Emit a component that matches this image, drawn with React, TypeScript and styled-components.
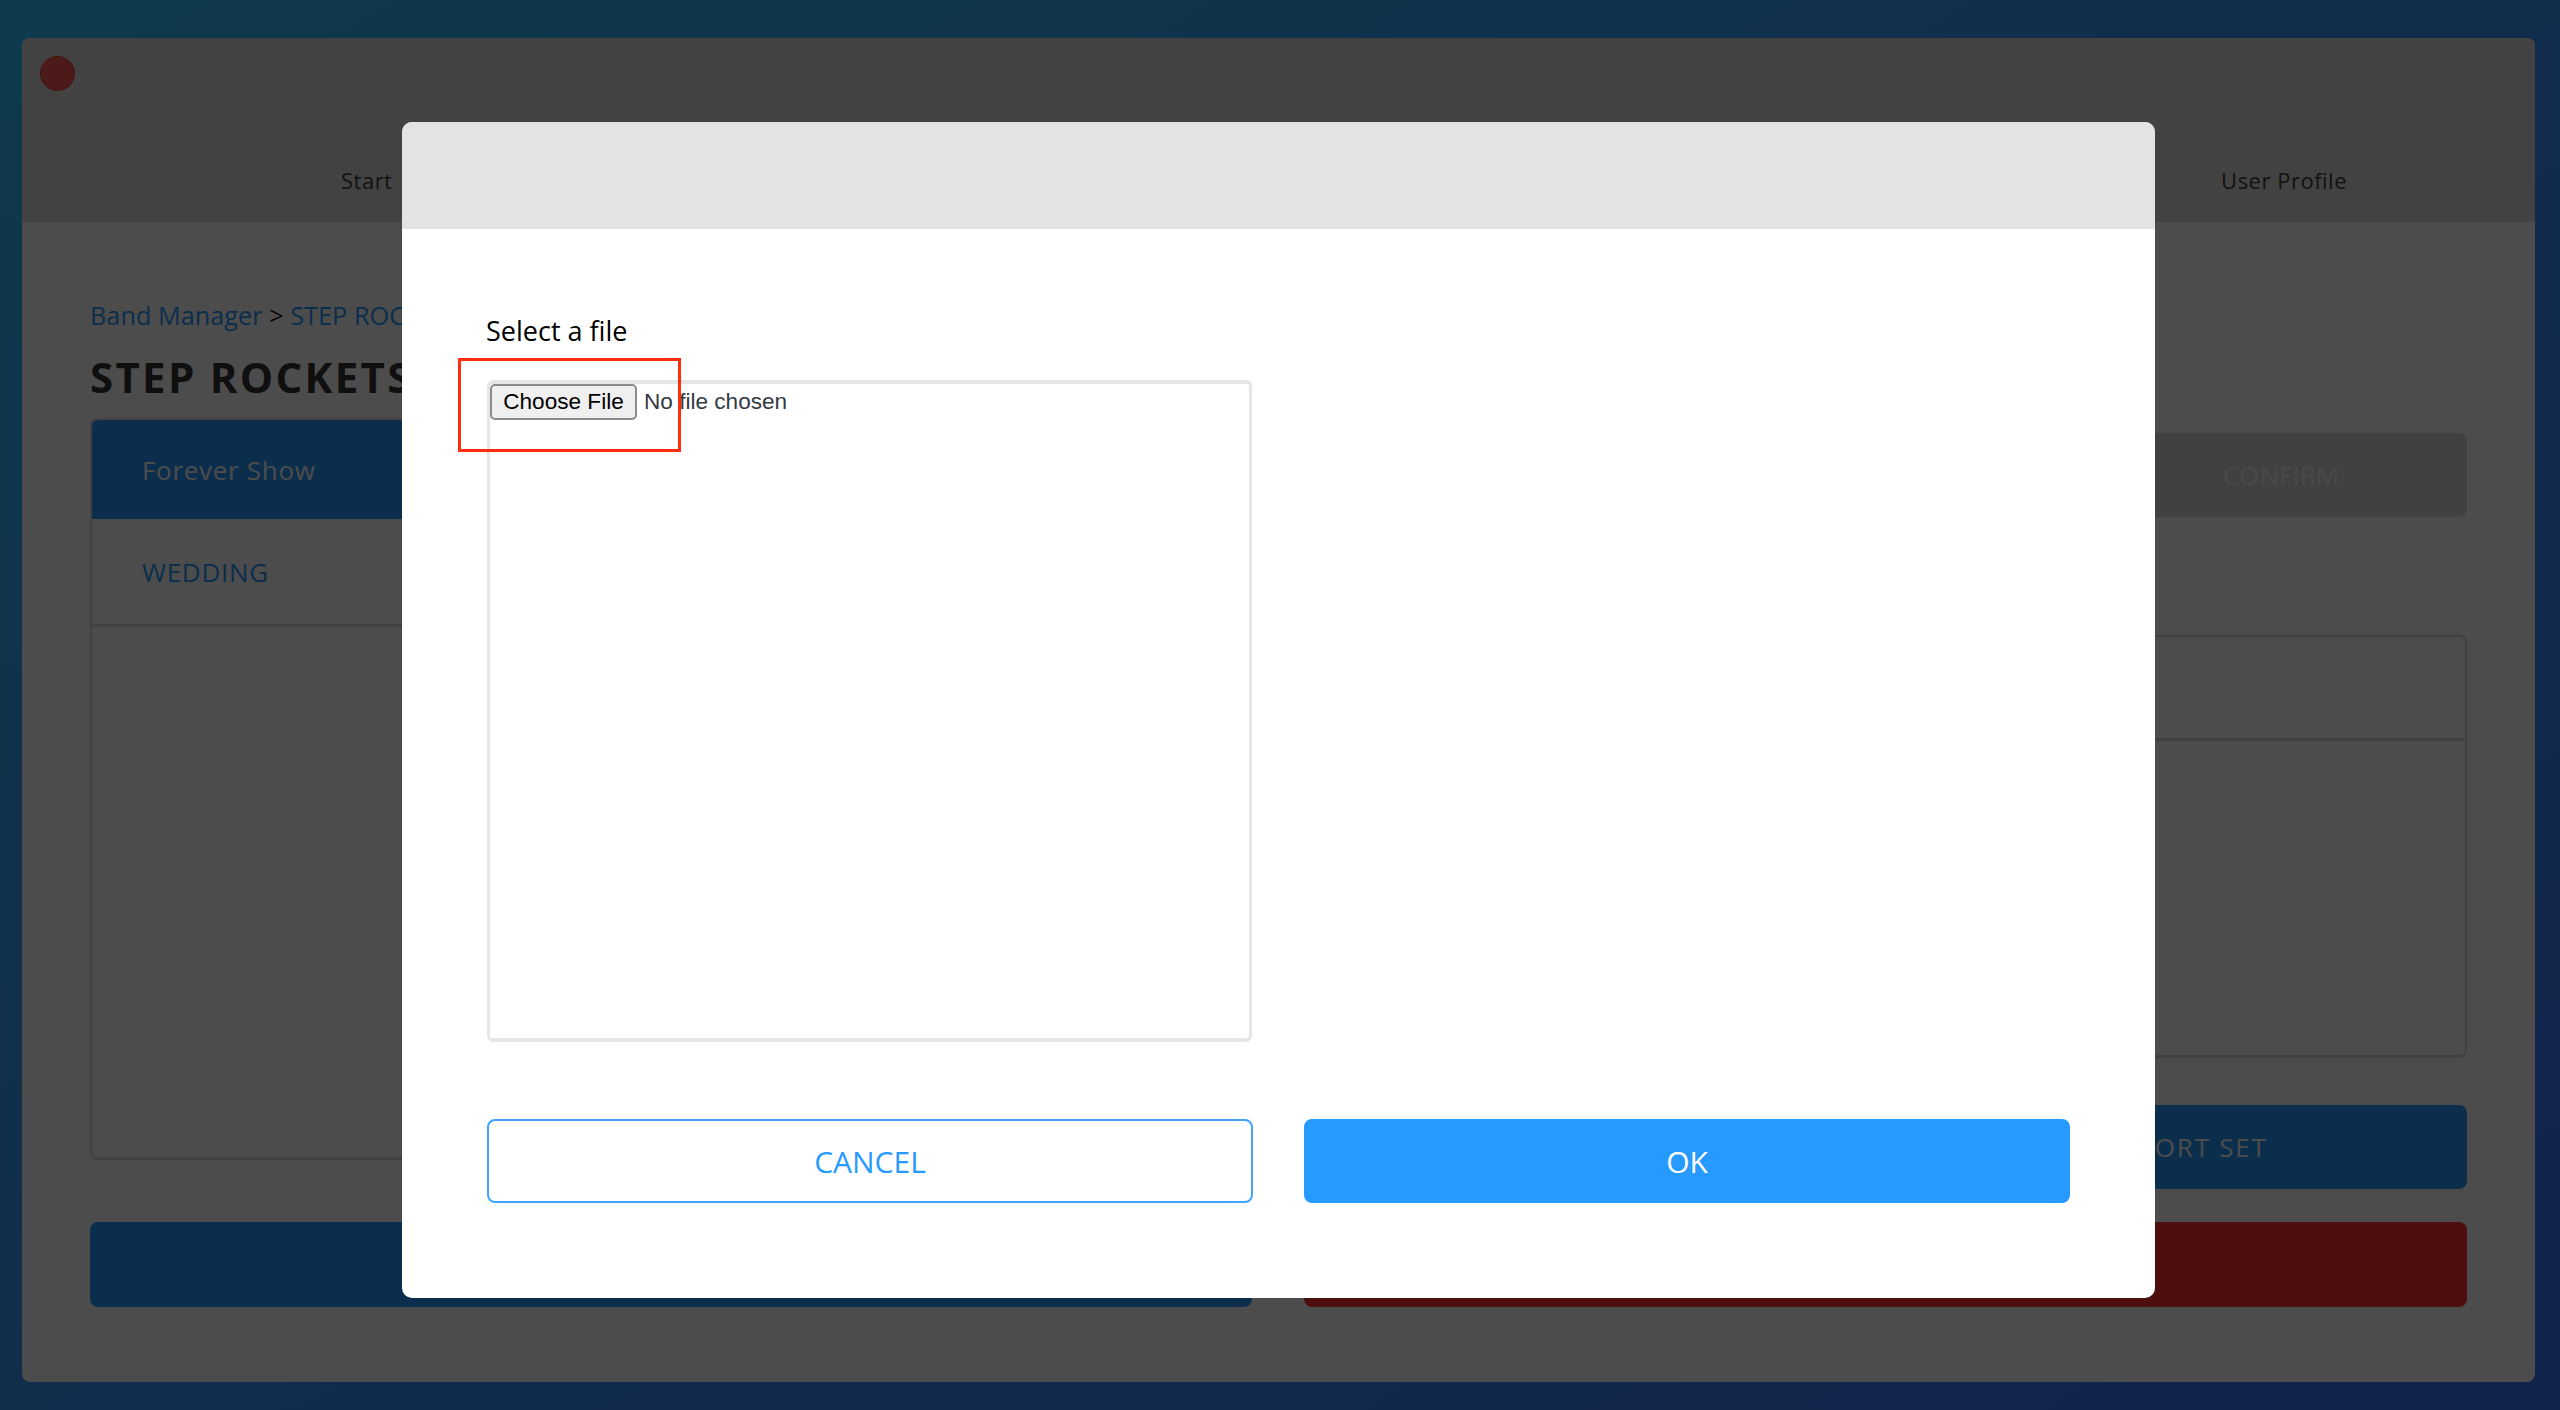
import React from "react";
import styled, { createGlobalStyle } from "styled-components";

const GlobalStyle = createGlobalStyle`
  html, body {
    margin: 0;
    padding: 0;
    height: 100%;
  }
  body {
    font-family: "Open Sans", "Noto Sans", sans-serif;
    overflow: hidden;
  }
`;

export default function App() {
  return (
    <>
      <GlobalStyle />
      <Desktop>
        <AppWindow>
          <Header>
            <CloseDot />
            <Nav>
              <NavLink>Start</NavLink>
              <NavLink>User Profile</NavLink>
            </Nav>
          </Header>
          <Main>
            <Breadcrumb>
              <a>Band Manager</a> &gt; <a>STEP ROCKETS</a>
            </Breadcrumb>
            <Title>STEP ROCKETS</Title>
            <Columns>
              <Column>
                <SetList>
                  <SetTab $active>Forever Show</SetTab>
                  <SetTab>WEDDING</SetTab>
                </SetList>
                <WideButton $tone="blue" />
              </Column>
              <Column>
                <ConfirmRow>
                  <ConfirmButton>CONFIRM</ConfirmButton>
                </ConfirmRow>
                <DetailPanel>
                  <DetailHead />
                </DetailPanel>
                <ExportRow>
                  <ExportButton>EXPORT SET</ExportButton>
                </ExportRow>
                <WideButton $tone="red" />
              </Column>
            </Columns>
          </Main>
        </AppWindow>

        <Backdrop />
        <Modal>
          <ModalHeader />
          <ModalBody>
            <FieldLabel>Select a file</FieldLabel>
            <DropBox>
              <FileRow>
                <FileButton type="button">Choose File</FileButton>
                <FileName>No file chosen</FileName>
              </FileRow>
            </DropBox>
            <Callout />
            <ModalActions>
              <ActionButton type="button">CANCEL</ActionButton>
              <ActionButton type="button" $primary>
                OK
              </ActionButton>
            </ModalActions>
          </ModalBody>
        </Modal>
      </Desktop>
    </>
  );
}

const Desktop = styled.div`
  position: relative;
  box-sizing: border-box;
  width: 2560px;
  height: 1410px;
  padding: 38px 25px 28px 22px;
  background: linear-gradient(to bottom right, #32c1ff 0%, #3996ff 50%, #3f75ff 100%);
`;

const AppWindow = styled.div`
  display: flex;
  flex-direction: column;
  height: 100%;
  background: #ffffff;
  border-radius: 8px;
  overflow: hidden;
`;

const Header = styled.header`
  position: relative;
  height: 184px;
  flex: none;
  background: #dedede;
`;

const CloseDot = styled.span`
  position: absolute;
  left: 18px;
  top: 18px;
  width: 35px;
  height: 35px;
  border-radius: 50%;
  background: #ff5750;
  border: 1px solid #d8433d;
  box-sizing: border-box;
`;

const Nav = styled.nav`
  display: flex;
  justify-content: space-between;
  align-items: flex-end;
  box-sizing: border-box;
  height: 100%;
  padding: 0 188px 27px 319px;
`;

const NavLink = styled.a`
  font-size: 22px;
  line-height: 30px;
  letter-spacing: 0.5px;
  color: #3c3c3c;
`;

const Main = styled.main`
  flex: 1;
  display: flex;
  flex-direction: column;
  padding: 0 68px;
`;

const Breadcrumb = styled.div`
  margin-top: 75px;
  font-size: 25.3px;
  line-height: 36px;
  color: #111111;

  a {
    color: #279aff;
  }
`;

const Title = styled.h1`
  margin: 15px 0 0;
  font-size: 42px;
  line-height: 57px;
  font-weight: 700;
  letter-spacing: 2.3px;
  color: #333333;
`;

const Columns = styled.div`
  display: grid;
  grid-template-columns: 1162px 1163px;
  column-gap: 52px;
  margin-top: 13px;
`;

const Column = styled.div`
  display: flex;
  flex-direction: column;
`;

const SetList = styled.div`
  height: 742px;
  margin-bottom: 62px;
  box-sizing: border-box;
  border: 2px solid #d9d9d9;
  border-bottom-width: 3px;
  border-radius: 8px;
  overflow: hidden;
`;

const SetTab = styled.div<{ $active?: boolean }>`
  display: flex;
  align-items: center;
  box-sizing: border-box;
  height: ${(p) => (p.$active ? "99px" : "108px")};
  padding-left: 50px;
  font-size: 26px;
  letter-spacing: 0.7px;
  font-weight: ${(p) => (p.$active ? 400 : 500)};
  color: ${(p) => (p.$active ? "#ffffff" : "#279aff")};
  background: ${(p) => (p.$active ? "#279aff" : "#ffffff")};
  border-bottom: ${(p) => (p.$active ? "0" : "3px solid #d9d9d9")};
`;

const WideButton = styled.div<{ $tone: "blue" | "red" }>`
  height: 85px;
  border-radius: 8px;
  background: ${(p) => (p.$tone === "blue" ? "#279aff" : "#ff2f2f")};
`;

const ConfirmRow = styled.div`
  display: flex;
  justify-content: flex-end;
  margin-top: 15px;
`;

const ConfirmButton = styled.div`
  display: flex;
  align-items: center;
  justify-content: center;
  width: 372px;
  height: 84px;
  border-radius: 8px;
  background: #dbdbdb;
  color: #f4f4f4;
  font-size: 26px;
`;

const DetailPanel = styled.div`
  height: 423px;
  margin-top: 118px;
  box-sizing: border-box;
  border: 2px solid #d9d9d9;
  border-bottom-width: 3px;
  border-radius: 8px;
`;

const DetailHead = styled.div`
  height: 101px;
  border-bottom: 3px solid #d9d9d9;
`;

const ExportRow = styled.div`
  display: flex;
  justify-content: flex-end;
  margin: 47px 0 33px;
`;

const ExportButton = styled.div`
  display: flex;
  align-items: center;
  justify-content: center;
  width: 562px;
  height: 84px;
  border-radius: 8px;
  background: #279aff;
  color: #ffffff;
  font-size: 26px;
  letter-spacing: 1.8px;
`;

const Backdrop = styled.div`
  position: absolute;
  inset: 0;
  background: rgba(0, 0, 0, 0.7);
`;

const Modal = styled.div`
  position: absolute;
  left: 402px;
  top: 122px;
  width: 1753px;
  height: 1176px;
  display: flex;
  flex-direction: column;
  background: #ffffff;
  border-radius: 10px;
  overflow: hidden;
`;

const ModalHeader = styled.div`
  height: 107px;
  flex: none;
  background: #e3e3e3;
`;

const ModalBody = styled.div`
  position: relative;
  flex: 1;
  display: flex;
  flex-direction: column;
  padding: 84px 85px 0;
`;

const FieldLabel = styled.label`
  margin-left: -1px;
  font-size: 27px;
  line-height: 36px;
  color: #000000;
`;

const DropBox = styled.div`
  width: 765px;
  height: 662px;
  margin-top: 31px;
  box-sizing: border-box;
  border: 3px solid #e6e6e6;
  border-top-width: 4px;
  border-bottom-width: 4px;
  border-radius: 6px;
  background: #ffffff;
`;

const FileRow = styled.div`
  display: flex;
  align-items: center;
  gap: 7px;
`;

const FileButton = styled.button`
  box-sizing: border-box;
  width: 147px;
  height: 36px;
  padding: 0;
  border: 2px solid #8a8a8a;
  border-radius: 5px;
  background: #efefef;
  color: #000000;
  font-family: "Liberation Sans", Arial, sans-serif;
  font-size: 22.6px;
`;

const FileName = styled.span`
  font-family: "Liberation Sans", Arial, sans-serif;
  font-size: 22.6px;
  color: #333a42;
`;

const Callout = styled.div`
  position: absolute;
  left: 56px;
  top: 129px;
  width: 223px;
  height: 94px;
  box-sizing: border-box;
  border: 3px solid #ff2d0f;
  pointer-events: none;
`;

const ModalActions = styled.div`
  display: grid;
  grid-template-columns: 766px 766px;
  column-gap: 51px;
  margin-top: 77px;
`;

const ActionButton = styled.button<{ $primary?: boolean }>`
  height: 84px;
  box-sizing: border-box;
  border: 2px solid ${(p) => (p.$primary ? "#279aff" : "#3fa5ff")};
  border-radius: 8px;
  font-family: "Open Sans", "Noto Sans", sans-serif;
  font-size: 30px;
  color: ${(p) => (p.$primary ? "#ffffff" : "#279aff")};
  background: ${(p) => (p.$primary ? "#279aff" : "#ffffff")};
`;
